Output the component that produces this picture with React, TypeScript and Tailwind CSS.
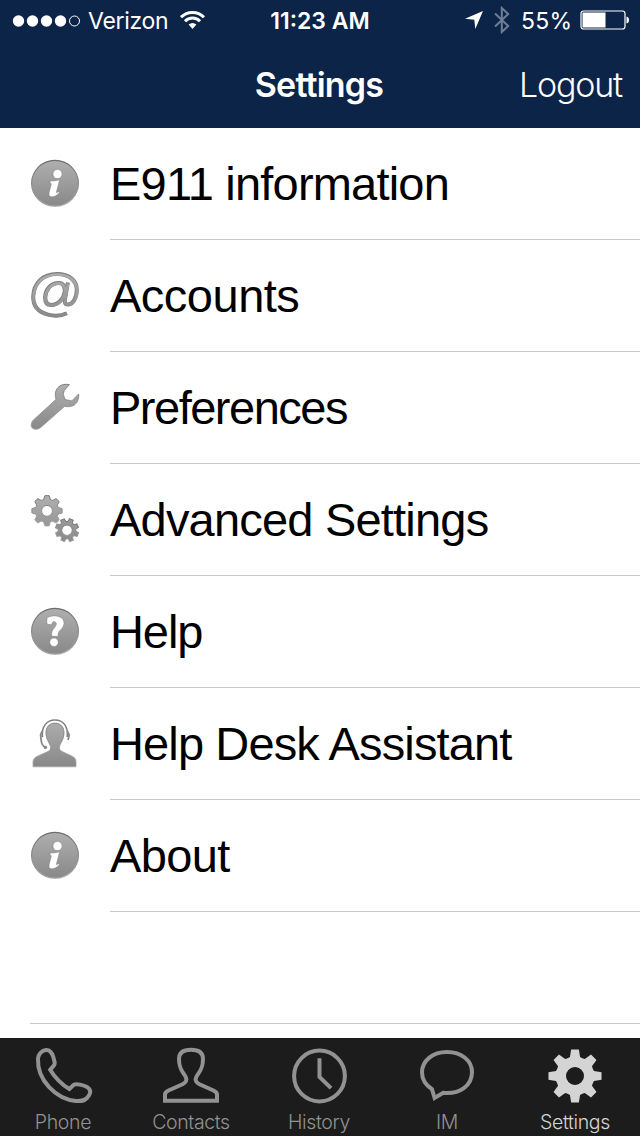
import type { ReactNode } from 'react';

const toothedWheel = (
  cx: number, cy: number, outer: number, root: number, hole: number,
  base = 0.3, tip = 0.16, teeth = 8,
) => {
  const pt = (r: number, a: number) => `${(cx + r * Math.sin(a)).toFixed(2)} ${(cy - r * Math.cos(a)).toFixed(2)}`;
  let d = '';
  for (let i = 0; i < teeth; i++) {
    const a = (i * 2 * Math.PI) / teeth;
    const next = a + (2 * Math.PI) / teeth;
    d += `${i ? 'L' : 'M'}${pt(root, a - base)} L${pt(outer, a - tip)} L${pt(outer, a + tip)} L${pt(root, a + base)} `;
    d += `Q${pt(root - 0.5, (a + next) / 2)} ${pt(root, next - base)} `;
  }
  return `${d}Z M${cx - hole} ${cy} a${hole} ${hole} 0 1 0 ${2 * hole} 0 a${hole} ${hole} 0 1 0 ${-2 * hole} 0Z`;
};

const Glyph = ({ children }: { children: ReactNode }) => (
  <svg width="50" height="50" viewBox="0 0 50 50" className="block shrink-0" fill="url(#metal)" stroke="none">
    {children}
  </svg>
);

const Defs = () => (
  <svg width="0" height="0" className="absolute">
    <defs>
      <linearGradient id="metal" x1="0" y1="0" x2="0" y2="50" gradientUnits="userSpaceOnUse">
        <stop offset="0" stopColor="#b0b0b0" />
        <stop offset="1" stopColor="#868686" />
      </linearGradient>
      <linearGradient id="rim" x1="0" y1="0" x2="0" y2="1">
        <stop offset="0" stopColor="#6c6c6c" />
        <stop offset="0.5" stopColor="#8a8a8a" />
        <stop offset="1" stopColor="#a8a8a8" />
      </linearGradient>
    </defs>
  </svg>
);

const Disc = () => <ellipse cx="25" cy="24.3" rx="23.4" ry="22.9" stroke="url(#rim)" strokeWidth="1.2" />;

const InfoIcon = () => (
  <Glyph>
    <Disc />
    <g fill="#fff" stroke="#747474" strokeWidth="0.4">
      <circle cx="27.5" cy="15" r="4.5" />
      <path d="M20.4 22 Q25 22.2 29.6 20.8 L26.4 33 Q26.2 34.8 28.4 32.6 L29.4 33.8 Q25.5 38 21.6 37.8 Q18.2 37.3 19.2 33.4 L21.3 25.6 Q21.7 23.9 19.8 23.9Z" />
    </g>
  </Glyph>
);

const AtIcon = () => (
  <Glyph>
    <g fill="none">
      <g stroke="#7c7c7c">
        <path d="M36.8 42.3 C31 45 25 45.4 18 43.6 C7.5 40.8 3 34 3.2 25.5 C3.7 12 13 3 27 3 C39.6 3 46.8 10 46.8 18.8 C46.8 27.8 42.3 33.6 37.7 33.6 C35 33.6 34.3 31.3 35 28 L37.9 11.5" strokeWidth="4" />
        <path d="M35 20.5 C35 14.8 32.8 12 28.8 12 C20.2 12 15.2 19.5 15.2 26.5 C15.2 31.5 17.6 34 21.2 34 C28.4 34 33.8 27.5 35 20.5Z" strokeWidth="4.2" />
      </g>
      <g stroke="url(#metal)" transform="translate(0.2 0.5)">
        <path d="M36.8 41.9 C31 44.6 25 45 18 43.2 C7.5 40.5 3 34 3.2 25.5 C3.7 12 13 3 27 3 C39.6 3 46.8 10 46.8 18.8 C46.8 27.8 42.3 33.2 37.7 33.2 C35 33.2 34.3 31.1 35 28 L37.9 11.9" strokeWidth="2.7" />
        <path d="M35 20.5 C35 14.8 32.8 12 28.8 12 C20.2 12 15.2 19.5 15.2 26.5 C15.2 31.3 17.6 33.6 21.2 33.6 C28.4 33.6 33.8 27.5 35 20.5Z" strokeWidth="2.9" />
      </g>
    </g>
  </Glyph>
);

const WrenchIcon = () => (
  <Glyph>
    <path d="M39.4 1.6 L34.2 7.6 L33.2 11.4 L35.2 16.6 L41.8 17.9 L48.6 11 C49.2 16.5 47 20.8 43 22.7 C40.2 24 37 23.8 34.4 23.4 L11.4 44 C8.4 46.8 4 47 2 44.8 C.3 42.6 1.2 39 3.8 36.6 L26 16.4 C24.5 11 25.4 6.6 29 3.6 C32 1.2 35.8 1 39.4 1.6Z" stroke="url(#rim)" strokeWidth="0.8" />
  </Glyph>
);

const GearsIcon = () => (
  <Glyph>
    <g fillRule="evenodd" stroke="url(#rim)" strokeWidth="0.9">
      <path d={toothedWheel(17, 15.8, 15.3, 11.9, 5.4, 0.28, 0.14)} />
      <path d={toothedWheel(37, 35.2, 11.8, 9, 5.2, 0.26, 0.17)} transform="rotate(22 37 35.2)" />
    </g>
  </Glyph>
);

const HelpIcon = () => (
  <Glyph>
    <Disc />
    <g fill="#fff" stroke="#747474" strokeWidth="0.4">
      <path d="M16.8 14.8 L17.1 10.8 C22 8 29.4 8.2 32.4 11.8 C35.4 15.5 33.8 20 30.4 23 C28.4 24.8 27.8 26.5 28.1 29.3 L21.9 29.3 C21.2 25.8 22 23.5 24.4 20.8 C26.6 18.4 26.9 16.3 25.6 15.2 C24 13.9 22 14.4 21.8 17.6 L17.4 17.3Z" />
      <circle cx="24" cy="35.2" r="4.2" />
    </g>
  </Glyph>
);

const AgentIcon = () => (
  <Glyph>
    <path d="M25 4.2 C31.5 4.2 34.4 9 34 15 C33.6 20.5 31.2 22.8 29.8 26.5 C28.6 30 30 31.5 33 33 L42.5 37.4 C45.5 39 46 41 46 43.5 V47.8 H3 V43.5 C3 41 4 39 7 37.4 L17 33 C20 31.5 21.4 30 20.2 26.5 C18.8 22.8 16.4 20.5 16 15 C15.6 9 18.5 4.2 25 4.2Z" stroke="url(#rim)" strokeWidth="0.8" />
    <path d="M12.4 18 C11.4 7 17 1 25 1 C33 1 38.4 7 37.2 18" fill="none" stroke="#808080" strokeWidth="1.6" />
    <path d="M12.2 12 L10.6 16 L11.2 21.5 C11.6 25 13 27.2 15.2 28.2 M37.4 12 L39.2 16 L38 21" fill="none" stroke="#888" strokeWidth="1.8" />
    <circle cx="15.4" cy="28.4" r="1.7" fill="#888" />
  </Glyph>
);

const rows: { label: string; icon: ReactNode; fit: string }[] = [
  { label: 'E911 information', icon: <InfoIcon />, fit: 'tracking-[-0.8px]' },
  { label: 'Accounts', icon: <AtIcon />, fit: 'tracking-[-0.5px]' },
  { label: 'Preferences', icon: <WrenchIcon />, fit: 'tracking-[-1.5px]' },
  { label: 'Advanced Settings', icon: <GearsIcon />, fit: 'tracking-[-0.8px]' },
  { label: 'Help', icon: <HelpIcon />, fit: 'tracking-[-1.1px]' },
  { label: 'Help Desk Assistant', icon: <AgentIcon />, fit: 'tracking-[-0.87px]' },
  { label: 'About', icon: <InfoIcon />, fit: 'tracking-[-0.6px]' },
];

const tabs: { label: string; icon: ReactNode; active?: boolean }[] = [
  { label: 'Phone', icon: <path d="M13.5 8 C17 7.6 20 10.4 21.3 15 C23 21 23.2 21.4 21.8 23.6 L18.2 27.8 C22 34.5 30 43 37.3 47 L41.5 43 C44 41 52 43.3 55.5 45.3 C60 48.3 58.3 52.4 55 56 C52 59 49.5 59.3 44 59 C24 57.4 5 38 6 16.5 C6.2 13 9.5 8.4 13.5 8Z" /> },
  { label: 'Contacts', icon: <path d="M31 7.8 C38.5 7.8 43 10.5 43 17 C43 27 39.5 29.5 36.5 34.5 C34.5 38 36 40.5 39.5 42.3 L53.5 48.5 Q57 50.2 57 52.5 V58.8 H5 V52.5 Q5 50.2 8.5 48.5 L22.5 42.3 C26 40.5 27.5 38 25.5 34.5 C22.5 29.5 19 27 19 17 C19 10.5 23.5 7.8 31 7.8Z" /> },
  { label: 'History', icon: <><circle cx="31.5" cy="34" r="25.4" /><path d="M31.5 16.2 V34.8 L43 46.2" /></> },
  { label: 'IM', icon: <path d="M16 47.2 L18.6 56 L27.2 50.8 C44 52.5 56 43.5 56 30 C56 18.5 45.5 10 31 10 C16.5 10 6 18.8 6 30.3 C6 37.5 9.5 43 16 47.2Z" /> },
  { label: 'Settings', active: true, icon: <path d={toothedWheel(31, 34, 26.8, 19.6, 9, 0.26, 0.145)} fill="#d4d4d4" fillRule="evenodd" stroke="none" /> },
];

const StatusBar = () => (
  <div className="grid h-10 grid-cols-[1fr_100px_1fr] items-center font-['Inter'] text-[23px] leading-[38px]">
    <div className="flex items-center pl-[12px]">
      <svg width="70" height="12" viewBox="0 0 70 12" fill="#fff" className="mt-px shrink-0">
        {[6.5, 20.5, 34.5, 48.5].map((x) => <circle key={x} cx={x} cy="6" r="5.7" />)}
        <circle cx="62.5" cy="6" r="5" fill="none" stroke="#fff" />
      </svg>
      <span className="ml-[6px] w-[80px] shrink-0 whitespace-nowrap pt-[2px] tracking-[-0.3px]">Verizon</span>
      <svg width="26" height="20" viewBox="0 0 26 20" className="ml-[12px] shrink-0" fill="none" stroke="#fff" strokeWidth="3">
        <path d="M1 7.2 A16.2 16.2 0 0 1 24 7.2" />
        <path d="M5 11.2 A10.5 10.5 0 0 1 20 11.2" />
        <path d="M8.6 14.6 L12.5 19 L16.4 14.6 Q12.5 11.4 8.6 14.6Z" fill="#fff" stroke="none" />
      </svg>
    </div>
    <span className="whitespace-nowrap pt-[2px] text-center font-semibold">11:23 AM</span>
    <div className="flex items-center justify-end pr-[10px]">
      <svg width="20" height="20" viewBox="0 0 20 20" fill="#fff"><path d="M19 1 L11.3 19 L10.3 9.8 L1 8.8Z" /></svg>
      <svg width="18" height="28" viewBox="0 0 18 28" className="ml-[9px]" fill="none" stroke="#6f7d94" strokeWidth="2">
        <path d="M2 7.5 L15.2 20 L8.8 26 V2 L15.2 8 L2 20.5" />
      </svg>
      <span className="ml-[10px] w-[54px] whitespace-nowrap pt-[2px] tracking-[0.3px]">55%</span>
      <svg width="50" height="20" viewBox="0 0 50 20" className="ml-[5px]">
        <rect x="1" y="1" width="44" height="18" rx="2.5" fill="none" stroke="#fff" strokeWidth="1.2" />
        <rect x="2.5" y="2.5" width="23" height="15" fill="#fff" />
        <path d="M46.5 6.5 Q49 7 49 10 Q49 13 46.5 13.5Z" fill="#fff" />
      </svg>
    </div>
  </div>
);

export default function App() {
  return (
    <main className="flex h-[1136px] w-[640px] flex-col overflow-hidden bg-white font-['Liberation_Sans',sans-serif] text-black">
      <Defs />
      <header className="h-[128px] shrink-0 bg-[#0c2448] text-white">
        <StatusBar />
        <div className="grid h-[88px] grid-cols-3 items-center pt-[2px] font-['Inter'] text-[34px] leading-[86px]">
          <h1 className="col-start-2 pr-[2px] text-center font-semibold tracking-[-0.8px]">Settings</h1>
          <button className="pr-[18px] text-right font-light tracking-[-1.2px]">Logout</button>
        </div>
      </header>
      <ul>
        {rows.map((row) => (
          <li key={row.label} className="flex h-[112px] items-start pl-[30px]">
            <div className="w-[80px] pt-[31px]">{row.icon}</div>
            <span className={`h-[112px] grow whitespace-nowrap border-b border-[#c8c7cc] text-[47px] leading-[111px] ${row.fit}`}>{row.label}</span>
          </li>
        ))}
      </ul>
      <div className="ml-[30px] h-[112px] border-b border-[#c8c7cc]" />
      <nav className="mt-auto grid h-[98px] grid-cols-5 bg-[#1c1c1c] font-['Inter'] text-[19.5px] font-light tracking-[-0.35px]">
        {tabs.map((tab) => (
          <button key={tab.label} className={tab.active ? 'flex flex-col items-center pt-[4px] text-[#d4d4d4]' : 'flex flex-col items-center pt-[4px] text-[#929292]'}>
            <svg width="64" height="64" viewBox="0 0 64 64" fill="none" stroke="#929292" strokeWidth="4" className="block shrink-0">{tab.icon}</svg>
            <span className="pr-[2px] leading-[32px]">{tab.label}</span>
          </button>
        ))}
      </nav>
    </main>
  );
}
